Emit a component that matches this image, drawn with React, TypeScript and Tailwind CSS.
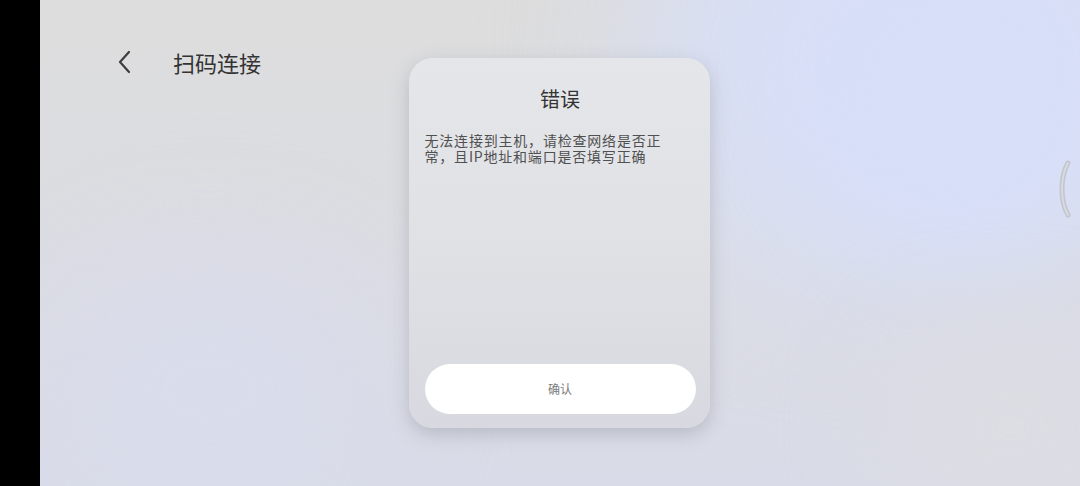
import React from "react";

function BackChevron() {
  return (
    <svg width="18" height="26" viewBox="0 0 18 26" fill="none">
      <path d="M13 3 L4 13 L13 23" stroke="#3d3d3d" strokeWidth="2.2" strokeLinecap="round" strokeLinejoin="round" />
    </svg>
  );
}

function EdgeHandle() {
  return (
    <svg width="18" height="60" viewBox="0 0 18 60" fill="none">
      <path d="M12 4 C4 18 4 42 12 56" stroke="#c3c5cc" strokeWidth="5" strokeLinecap="round" />
      <path d="M12 4 C4 18 4 42 12 56" stroke="#d8dae1" strokeWidth="2" strokeLinecap="round" />
    </svg>
  );
}

function Backdrop() {
  return (
    <div className="absolute inset-0">
      <div className="absolute inset-0 bg-[linear-gradient(180deg,#dddddd_0%,#dcdde2_45%,#d9dce8_100%)]" />
      <div className="absolute left-[600px] top-[-160px] w-[560px] h-[440px] rounded-full bg-[#d8dff6] blur-[70px]" />
      <div className="absolute left-[780px] top-[-40px] w-[280px] h-[280px] rounded-full bg-[#d7dff9] blur-[50px]" />
      <div className="absolute left-[0px] top-[260px] w-[340px] h-[260px] rounded-full bg-[#d9dcea] blur-[60px]" />
      <div className="absolute left-[840px] top-[330px] w-[260px] h-[200px] rounded-full bg-[#dcdde3] blur-[50px]" />
    </div>
  );
}

function ErrorDialog() {
  return (
    <div className="w-[301px] h-[370px] rounded-[24px] bg-[linear-gradient(180deg,#e5e6e9_0%,#e0e1e5_50%,#d8d9e0_100%)] shadow-[0_6px_18px_rgba(120,122,135,0.35)] flex flex-col pl-[16px] pr-[14px] pb-[14px]">
      <div className="pt-[27px] text-center text-[20px] leading-[28px] text-[#333333]">错误</div>
      <div className="mt-[19px] w-[246px] text-[14px] leading-[16px] tracking-[0.8px] text-[#505050]">
        无法连接到主机，请检查网络是否正常，且IP地址和端口是否填写正确
      </div>
      <div className="flex-1" />
      <button className="h-[50px] w-full rounded-full bg-white text-[12px] text-[#7a7a7a] flex items-center justify-center">
        确认
      </button>
    </div>
  );
}

export default function App() {
  return (
    <div
      className="flex w-[1080px] h-[486px] overflow-hidden bg-black"
      style={{ fontFamily: '"Noto Sans CJK SC", "Noto Sans", sans-serif' }}
    >
      <div className="w-[40px] shrink-0 bg-black" />
      <div className="relative flex-1 overflow-hidden">
        <Backdrop />

        <header className="relative flex items-center gap-[39px] pl-[76px] pt-[48px]">
          <BackChevron />
          <span className="text-[22px] leading-[28px] text-[#333333]">扫码连接</span>
        </header>

        {/* modal layer */}
        <div className="absolute inset-0 flex justify-center pt-[58px] pr-[2px]">
          <ErrorDialog />
        </div>

        {/* side gesture handle */}
        <div className="absolute right-[6px] top-[159px]">
          <EdgeHandle />
        </div>
      </div>
    </div>
  );
}
